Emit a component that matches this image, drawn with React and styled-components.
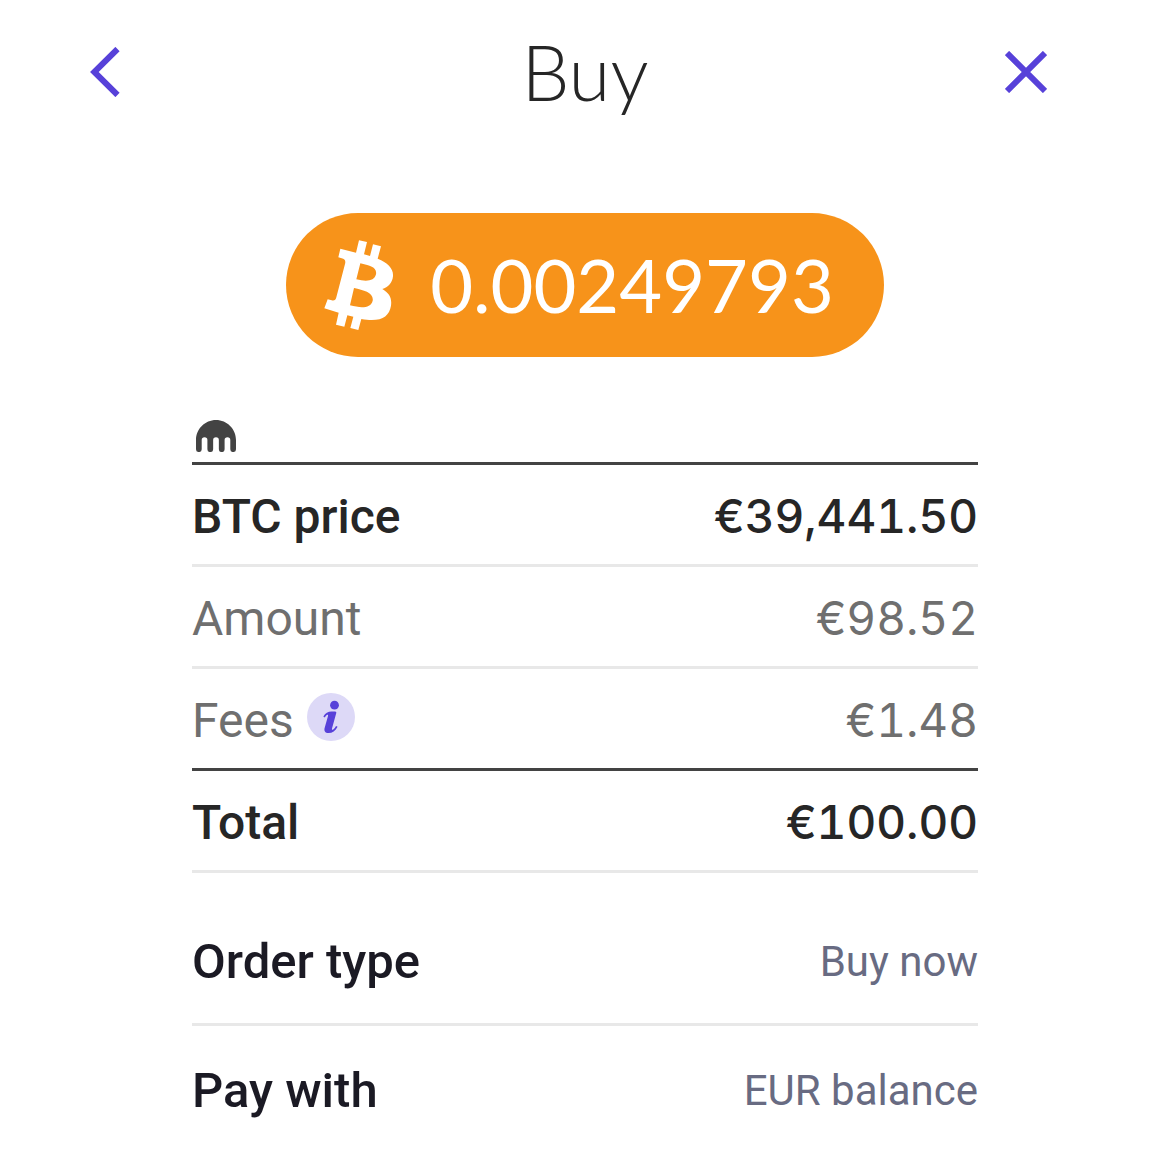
import React from 'react';
import styled, { createGlobalStyle } from 'styled-components';

const COLORS = {
  primary: '#5741d9',
  primaryLight: '#ddd9f7',
  bitcoin: '#f7931a',
  text: '#262626',
  heading: '#1b1a24',
  muted: '#6f6f6f',
  slate: '#686b82',
  lineDark: '#434343',
  line: '#e8e8e8',
};

const App = () => {
  return (
    <Page>
      <GlobalStyle />
      <Header>
        <BackButton type="button" aria-label="Back">
          <svg width="30" height="50" viewBox="0 0 30 50" fill="none">
            <path d="M27.500 2 4.300 25l23.200 23" stroke="currentColor" strokeWidth="6" />
          </svg>
        </BackButton>
        <Title>Buy</Title>
        <CloseButton type="button" aria-label="Close">
          <svg width="42" height="42" viewBox="0 0 42 42" fill="none">
            <path d="M2 2l38 38M40 2L2 40" stroke="currentColor" strokeWidth="6" />
          </svg>
        </CloseButton>
      </Header>

      <Main>
        <AmountPill>
          <BitcoinIcon />
          <span>0.00249793</span>
        </AmountPill>

        <Details>
          <KrakenIcon />
          <Summary>
            <tbody>
              <SummaryRow label="BTC price" value="€39,441.50" strong />
              <SummaryRow label="Amount" value="€98.52" />
              <SummaryRow label="Fees" value="€1.48" info divider={COLORS.lineDark} />
              <SummaryRow label="Total" value="€100.00" strong />
            </tbody>
          </Summary>

          <Options>
            <Option>
              <OptionName>Order type</OptionName>
              <OptionValue>Buy now</OptionValue>
            </Option>
            <Option>
              <OptionName>Pay with</OptionName>
              <OptionValue>EUR balance</OptionValue>
            </Option>
          </Options>
        </Details>
      </Main>
    </Page>
  );
};

const SummaryRow = ({ label, value, strong, info, divider = COLORS.line }) => (
  <Row $strong={strong} $divider={divider}>
    <th scope="row">
      <Label>
        {label}
        {info && (
          <InfoButton type="button" aria-label="About fees">
            <InfoIcon />
          </InfoButton>
        )}
      </Label>
    </th>
    <td>{value}</td>
  </Row>
);

const BitcoinIcon = () => (
  <svg width="70" height="90" viewBox="13 16 210 270" fill="#fff" aria-hidden="true">
    <path
      fillRule="evenodd"
      d="M62 42 109 54 118 17 142 22 133 59 151 64 160 29 184 35 174 72C205 84 222 102 220 125C218 145 205 158 188 163C210 177 217 190 214 213C208 248 182 263 125 253L116 286 92 280 101 246 83 242 74 276 49 270 57 234 14 221 24 194 36 197C44 199 48 196 50 188L76 88C79 77 75 73 66 71L56 68ZM122 86 110 134C140 142 164 140 169 119C173 97 148 92 122 86ZM103 160 91 212C125 221 153 221 159 198C163 174 133 167 103 160Z"
    />
  </svg>
);

const KrakenIcon = () => (
  <KrakenMark width="40" height="32" viewBox="0 0 40 32" aria-hidden="true">
    <path
      fill={COLORS.lineDark}
      d="M20 0C9 0 0 9 0 20v9.200a2.850 2.850 0 0 0 5.700 0V20a2.850 2.850 0 0 1 5.700 0v9.200a2.850 2.850 0 0 0 5.750 0V20a2.850 2.850 0 0 1 5.700 0v9.200a2.850 2.850 0 0 0 5.750 0V20a2.850 2.850 0 0 1 5.700 0v9.200a2.850 2.850 0 0 0 5.700 0V20C40 9 31 0 20 0z"
    />
  </KrakenMark>
);

const InfoIcon = () => (
  <svg width="48" height="48" viewBox="0 0 48 48" fill="none" aria-hidden="true">
    <circle cx="27.500" cy="12.200" r="4.400" fill="currentColor" />
    <path
      fill="currentColor"
      d="M16.300 23.400C18.300 20 21 18.500 24.500 18.500H28C29.200 18.500 29.500 19.200 29.200 20.300L25 35.500C24.700 36.700 25.300 37.100 26.200 36.500C27.400 35.700 28.300 34.300 29 33L30.600 33.800C28.400 38 25.400 40.100 21.600 40.100C18 40.100 16.800 37.900 17.700 34.800L21 23C21.300 21.800 20.600 21.400 19.800 22C19 22.500 18.400 23.400 17.800 24.400Z"
    />
  </svg>
);

const GlobalStyle = createGlobalStyle`
  *, *::before, *::after {
    box-sizing: border-box;
  }

  body {
    margin: 0;
    background: #fff;
    color: ${COLORS.text};
    font-family: Roboto, 'Liberation Sans', sans-serif;
  }
`;

const Page = styled.div`
  min-height: 100vh;
`;

const Header = styled.header`
  display: grid;
  grid-template-columns: 1fr auto 1fr;
  align-items: center;
  height: 144px;
`;

const IconButton = styled.button`
  display: flex;
  padding: 0;
  border: none;
  background: none;
  color: ${COLORS.primary};
  cursor: pointer;
`;

const BackButton = styled(IconButton)`
  justify-self: start;
  margin-left: 90px;
`;

const CloseButton = styled(IconButton)`
  justify-self: end;
  margin-right: 123px;
`;

const Title = styled.h1`
  margin: 0;
  font-family: Lato, sans-serif;
  font-size: 76px;
  font-weight: 300;
  line-height: 96px;
`;

const Main = styled.main`
  display: flex;
  flex-direction: column;
  align-items: center;
  padding: 69px 192px 0;
`;

const AmountPill = styled.div`
  display: flex;
  align-items: center;
  gap: 36px;
  height: 144px;
  padding: 0 50px 0 38px;
  border-radius: 72px;
  background: ${COLORS.bitcoin};
  color: #fff;
  font-family: Lato, sans-serif;
  font-size: 74px;
  line-height: 96px;
`;

const Details = styled.section`
  width: 100%;
  margin-top: 63px;
`;

const KrakenMark = styled.svg`
  display: block;
  margin: 0 4px 10px;
`;

const Summary = styled.table`
  width: 100%;
  border-top: 3px solid ${COLORS.lineDark};
  border-spacing: 0;
  font-size: 48px;
  line-height: 56px;
`;

const Row = styled.tr`
  color: ${({ $strong }) => ($strong ? COLORS.text : COLORS.muted)};

  th,
  td {
    height: 102px;
    padding: 4px 0 0;
    border-bottom: 3px solid ${({ $divider }) => $divider};
    font-weight: ${({ $strong }) => ($strong ? 500 : 400)};
    vertical-align: middle;
  }

  th {
    text-align: left;
  }

  td {
    padding-top: 2px;
    font-family: Inter, sans-serif;
    font-size: 46px;
    font-variant-numeric: tabular-nums;
    text-align: right;
  }
`;

const Label = styled.span`
  display: flex;
  align-items: flex-start;
  gap: 13px;
`;

const InfoButton = styled(IconButton)`
  border-radius: 50%;
  background: ${COLORS.primaryLight};
`;

const Options = styled.dl`
  margin: 24px 0 0;
`;

const Option = styled.div`
  display: flex;
  align-items: center;
  justify-content: space-between;
  height: 129px;
  padding-top: 2px;
  border-bottom: 3px solid ${COLORS.line};

  &:last-child {
    border-bottom-color: transparent;
  }
`;

const OptionName = styled.dt`
  color: ${COLORS.heading};
  font-size: 49px;
  font-weight: 500;
`;

const OptionValue = styled.dd`
  margin: 0;
  color: ${COLORS.slate};
  font-size: 42px;
`;

export default App;
